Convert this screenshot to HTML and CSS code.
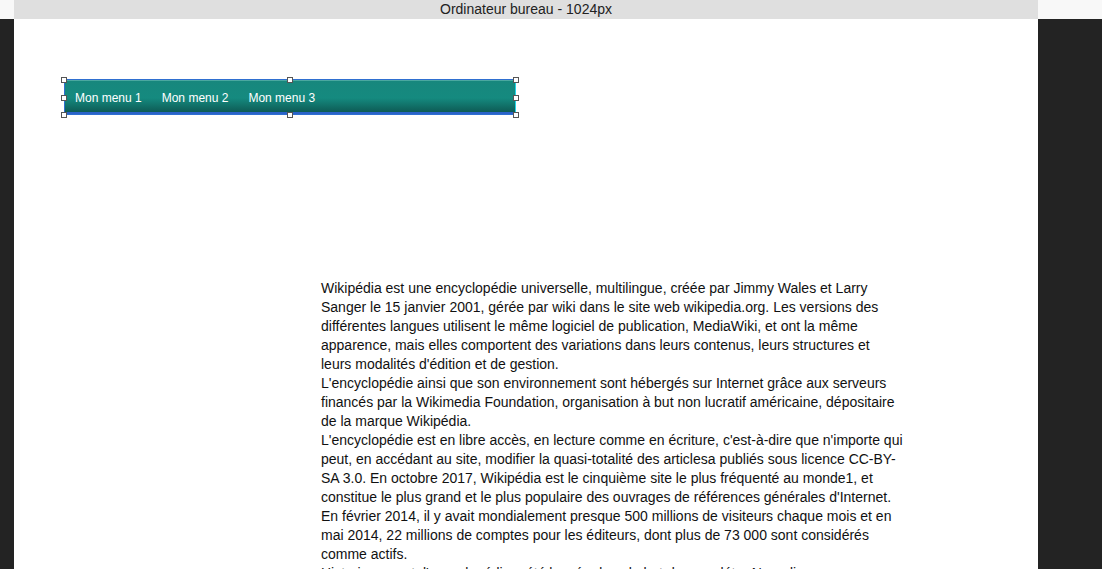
FILE: index.html
```html
<!DOCTYPE html>
<html lang="fr">
<head>
  <meta charset="UTF-8" />
  <meta name="viewport" content="width=device-width, initial-scale=1.0"/>
  <title>Ordinateur bureau - 1024px</title>
  <link rel="stylesheet" href="styles.css">
</head>
<body>

  <!-- Top bar -->
  <div class="topbar">
    <div class="side"></div>
    <div class="title">Ordinateur bureau - 1024px</div>
    <div class="side fill"></div>
  </div>

  <div class="stage">
    <div class="gutter"></div>

    <!-- Page canvas -->
    <div class="canvas">
      <div class="menu-wrap">
        <ul class="menu">
          <li>Mon menu 1</li>
          <li>Mon menu 2</li>
          <li>Mon menu 3</li>
        </ul>
        <!-- Selection handles -->
        <span class="handle tl"></span>
        <span class="handle tc"></span>
        <span class="handle tr"></span>
        <span class="handle ml"></span>
        <span class="handle mr"></span>
        <span class="handle bl"></span>
        <span class="handle bc"></span>
        <span class="handle br"></span>
      </div>

      <p class="content">
        Wikipédia est une encyclopédie universelle, multilingue, créée par Jimmy Wales et Larry Sanger le 15 janvier 2001, gérée par wiki dans le site web wikipedia.org. Les versions des différentes langues utilisent le même logiciel de publication, MediaWiki, et ont la même apparence, mais elles comportent des variations dans leurs contenus, leurs structures et leurs&nbsp;modalités d'édition et de gestion.<br>
        L'encyclopédie ainsi que son environnement sont hébergés sur Internet grâce aux serveurs financés par la Wikimedia Foundation, organisation à but non lucratif américaine, dépositaire de la marque Wikipédia.<br>
        L'encyclopédie est en libre accès, en lecture comme en écriture, c'est-à-dire que n'importe qui peut, en accédant au site, modifier la quasi-totalité des articlesa publiés sous licence CC-BY-SA 3.0. En octobre 2017, Wikipédia est le cinquième site le plus fréquenté au monde1, et constitue le plus grand et le plus populaire des ouvrages de références générales d'Internet.<br>
        En février 2014, il y avait mondialement presque 500 millions de visiteurs chaque mois et en mai 2014, 22 millions de comptes pour les éditeurs, dont plus de 73 000 sont considérés comme actifs.<br>
        Historiquement, l'encyclopédie a été lancée dans le but de compléter Nupedia, une encyclopédie rédigée par des experts.
      </p>
    </div>

    <div class="gutter"></div>
  </div>

</body>
</html>
```

FILE: styles.css
```css
* {
  box-sizing: border-box;
  margin: 0;
  padding: 0;
}
body {
  background-color: #232323;
  font-family: "Liberation Sans", Arial, sans-serif;
  overflow: hidden;
}
.topbar {
  display: flex;
  height: 19px;
  background-color: #f8f8f8;
}
.topbar .side {
  width: 14px;
}
.topbar .side.fill {
  flex: 1;
}
.title {
  width: 1024px;
  background-color: #dfdfdf;
  color: #222;
  font-size: 14px;
  line-height: 19px;
  text-align: center;
}
.stage {
  display: flex;
  height: 550px;
}
.gutter {
  width: 14px;
}
.canvas {
  width: 1024px;
  background-color: #fff;
  padding-top: 60px;
}
.menu-wrap {
  position: relative;
  width: 452px;
  height: 36px;
  margin-left: 50px;
  border: 1px solid #2f6fd0;
  border-right-color: #22d6e8;
}
.menu {
  list-style: none;
  display: flex;
  height: 100%;
  padding-left: 10px;
  background: linear-gradient(#17877d 0%, #158a7f 55%, #0e5b55 100%);
  border-top: 1px solid #4aa8a0;
  border-bottom: 2px solid #2a63c9;
}
.menu li {
  color: #fff;
  font-size: 12px;
  line-height: 34px;
  margin-right: 20px;
}
.handle {
  position: absolute;
  width: 6px;
  height: 6px;
  background: #fff;
  border: 1px solid #555;
}
.tl { left: -4px; top: -3px; }
.tc { left: 222px; top: -3px; }
.tr { right: -4px; top: -3px; }
.ml { left: -4px; top: 15px; }
.mr { right: -4px; top: 15px; }
.bl { left: -4px; bottom: -4px; }
.bc { left: 222px; bottom: -4px; }
.br { right: -4px; bottom: -4px; }
.content {
  width: 590px;
  margin: 164px 0 0 307px;
  color: #111;
  font-size: 14px;
  line-height: 19px;
}
```
